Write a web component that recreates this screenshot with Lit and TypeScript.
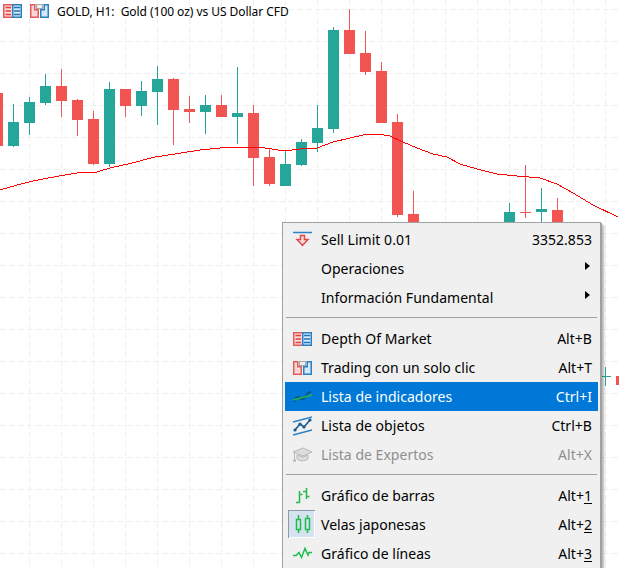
import { LitElement, html, css, svg } from "lit";
import { customElement } from "lit/decorators.js";

const RED = "#f25551";
const TEAL = "#26a69a";

// [bodyLeft, isTeal, bodyTop, bodyBottom, wickTop, wickBottom]
const CANDLES: [number, number, number, number, number, number][] = [
  [-8, 0, 93, 146, 93, 146],
  [8, 1, 122, 146, 104, 147],
  [24, 1, 102, 123, 97, 135],
  [40, 1, 86, 103, 74, 105],
  [56, 0, 86, 101, 69, 117],
  [72, 0, 100, 120, 99, 136],
  [88, 0, 119, 164, 111, 165],
  [104, 1, 89, 164, 82, 167],
  [120, 0, 89, 106, 89, 117],
  [136, 1, 91, 106, 81, 116],
  [152, 1, 79, 92, 66, 125],
  [168, 0, 79, 110, 78, 145],
  [184, 0, 109, 112, 96, 123],
  [200, 1, 105, 112, 95, 134],
  [216, 0, 105, 117, 95, 117],
  [232, 1, 113, 117, 67, 144],
  [248, 0, 113, 158, 105, 186],
  [264, 0, 157, 184, 148, 186],
  [280, 1, 164, 186, 150, 186],
  [296, 1, 142, 165, 139, 166],
  [312, 1, 128, 143, 105, 152],
  [328, 1, 30, 129, 27, 133],
  [344, 0, 30, 54, 9, 54],
  [360, 0, 53, 72, 31, 75],
  [376, 0, 71, 123, 62, 123],
  [392, 0, 122, 215, 114, 217],
  [408, 0, 214, 240, 191, 240],
  [504, 1, 212, 240, 203, 240],
  [520, 0, 212, 213, 165, 218],
  [536, 1, 209, 212, 188, 240],
  [552, 0, 210, 240, 198, 240],
  [600, 1, 376, 377, 367, 386],
  [616, 0, 376, 385, 376, 385],
];

const MA =
  "0,190 17,185 33,181 48,178 65,175 80,172.5 95,172.5 110,168 130,163.5 155,157 175,154 200,150 220,148 240,147 265,148 285,151 300,149 317,148 333,142 350,138 363,135 378,134 390,136 403,142 417,148 433,154 447,157 460,164 477,169 497,174 517,176 540,178 557,184 573,193 593,205 618,217";

const xs = Array.from({ length: 19 }, (_, i) => 29 + i * 32);
const ys = Array.from({ length: 18 }, (_, i) => 9 + i * 32);

const depthIcon = svg`
  <rect x="5.750" y="8.750" width="9" height="12.500" fill="#fbd8d8" stroke="#e25c5c" stroke-width="1.500"/>
  <rect x="14.750" y="8.750" width="8.500" height="12.500" fill="#d5e8f7" stroke="#2a7fc2" stroke-width="1.500"/>
  <path d="M7.500 11.500h5.500M7.500 15h5.500M7.500 18.500h5.500" stroke="#e0403f" stroke-width="1.500"/>
  <path d="M16 11.500h6M16 15h6M16 18.500h6" stroke="#1f74b8" stroke-width="1.500"/>`;

const tradeIcon = svg`
  <path d="M5.750 8.750h4v5h3.500v7.500h-7.500z" fill="#fbd8d8" stroke="#e25c5c" stroke-width="1.500"/>
  <path d="M23.250 8.750h-4v5h-3.500v7.500h7.500z" fill="#d5e8f7" stroke="#2a7fc2" stroke-width="1.500"/>
  <rect x="11.500" y="8.500" width="6" height="4" fill="#eee" stroke="#a8a8a8"/>`;

const sellIcon = svg`
  <path d="M5 7.500h19" stroke="#2f83c4" stroke-width="1.500"/>
  <path d="M12.500 10.500h4v4h3.500l-5.500 6-5.500-6h3.500z" fill="#fbd8d8" stroke="#e04a49" stroke-width="1.500"/>`;

const indIcon = svg`
  <path d="M6 20c2-6 4-6 6-4s4 2 6-2 3-4 5-4" fill="none" stroke="#0b4f86" stroke-width="1.800"/>
  <path d="M5 18l19-5" stroke="#1fb54a" stroke-width="1.300"/>`;

const objIcon = svg`
  <path d="M5 11l19-5M5 24l19-5" stroke="#2f83c4" stroke-width="1.300"/>
  <path d="M7 19l5-6 4 3 6-7" fill="none" stroke="#155a94" stroke-width="1.600"/>
  <circle cx="7" cy="19" r="1.600" fill="#155a94"/><circle cx="12" cy="13" r="1.600" fill="#155a94"/>
  <circle cx="16" cy="16" r="1.600" fill="#155a94"/><circle cx="22" cy="9" r="1.600" fill="#155a94"/>`;

const capIcon = svg`
  <path d="M5 12l10-4 9 4-9 4z" fill="#dcdcdc" stroke="#b9b9b9"/>
  <path d="M9 15v4c3 2.500 8 2.500 11 0v-4l-5 2z" fill="#dcdcdc" stroke="#b9b9b9"/>
  <path d="M6.500 13v6" stroke="#b9b9b9"/><circle cx="6.500" cy="20.500" r="1.500" fill="#b9b9b9"/>`;

const barIcon = svg`
  <path d="M11.500 10v12M8 21.500h3.500M11.500 13.500h3" stroke="#1fbb4a" stroke-width="1.500" fill="none"/>
  <path d="M18.500 7v11M15 10.500h3.500M18.500 15.500h3" stroke="#1fbb4a" stroke-width="1.500" fill="none"/>`;

const candleIcon = svg`
  <path d="M10.500 5v18M19.500 5v18" stroke="#1fbb4a" stroke-width="1.500"/>
  <rect x="8.500" y="9.500" width="4" height="10" fill="#d5e3f1" stroke="#1fbb4a" stroke-width="1.500"/>
  <rect x="17.500" y="8.500" width="4" height="11" fill="#d5e3f1" stroke="#1fbb4a" stroke-width="1.500"/>`;

const lineIcon = svg`
  <path d="M5 16.500h3l3-3 2.500 5 3.500-9 3 6.500 1-2.500h3" fill="none" stroke="#1fbb4a" stroke-width="1.500"/>`;

type Row = {
  icon?: unknown;
  label?: string;
  right?: string;
  digit?: string;
  arrow?: boolean;
  active?: boolean;
  disabled?: boolean;
  pressed?: boolean;
  sep?: boolean;
};

const ROWS: Row[] = [
  { icon: sellIcon, label: "Sell Limit 0.01", right: "3352.853" },
  { label: "Operaciones", arrow: true },
  { label: "Información Fundamental", arrow: true },
  { sep: true },
  { icon: depthIcon, label: "Depth Of Market", right: "Alt+B" },
  { icon: tradeIcon, label: "Trading con un solo clic", right: "Alt+T" },
  { icon: indIcon, label: "Lista de indicadores", right: "Ctrl+I", active: true },
  { icon: objIcon, label: "Lista de objetos", right: "Ctrl+B" },
  { icon: capIcon, label: "Lista de Expertos", right: "Alt+X", disabled: true },
  { sep: true },
  { icon: barIcon, label: "Gráfico de barras", right: "Alt+", digit: "1" },
  { icon: candleIcon, label: "Velas japonesas", right: "Alt+", digit: "2", pressed: true },
  { icon: lineIcon, label: "Gráfico de líneas", right: "Alt+", digit: "3" },
];

@customElement("app-root")
export class AppRoot extends LitElement {
  static styles = css`
    :host {
      display: block;
      position: relative;
      width: 619px;
      height: 568px;
      overflow: hidden;
      background: #fff;
      font-family: "Noto Sans", sans-serif;
    }
    .chart {
      position: absolute;
      inset: 0;
      display: block;
    }
    .head {
      position: absolute;
      left: 3px;
      top: 4px;
      display: flex;
      align-items: center;
      gap: 8px;
      height: 14px;
      font-size: 12px;
      letter-spacing: -0.05px;
      color: #000;
      white-space: pre;
    }
    .head svg {
      display: block;
      width: 19px;
      height: 14px;
    }
    .menu {
      position: absolute;
      left: 282px;
      top: 222px;
      width: 313px;
      height: 360px;
      padding: 2px;
      background: #f0f0f0;
      border: 1px solid #a0a0a0;
      box-shadow: 1px 1px 0 #a0a0a0, 3px 3px 2px rgba(0, 0, 0, 0.28);
      font-size: 14px;
      letter-spacing: 0.03px;
      color: #000;
    }
    .row {
      display: flex;
      align-items: center;
      height: 29px;
      padding-right: 6px;
    }
    .icon {
      flex: none;
      width: 27px;
      height: 29px;
      margin: 0 6px 0 3px;
      box-sizing: border-box;
    }
    .icon svg {
      display: block;
      width: 27px;
      height: 29px;
    }
    .label {
      flex: 1;
      white-space: nowrap;
    }
    .right {
      white-space: nowrap;
    }
    .right u {
      text-underline-offset: 2px;
    }
    .arrow {
      width: 0;
      height: 0;
      margin: -5px 2px 0 0;
      border-left: 5px solid #000;
      border-top: 4.5px solid transparent;
      border-bottom: 4.5px solid transparent;
    }
    .active {
      background: #0078d7;
      color: #fff;
    }
    .disabled {
      color: #8f8f8f;
    }
    .pressed .icon {
      height: 28px;
      background: #d5e3f1;
      align-self: flex-start;
      box-shadow: inset 1px 1px 0 #8d9aa6, inset -1px -1px 0 #ffffff;
    }
    .sep {
      height: 12px;
      display: flex;
      align-items: flex-start;
      padding: 5px 1px 0;
      box-sizing: border-box;
    }
    .sep i {
      display: block;
      flex: 1;
      height: 1px;
      background: #a0a0a0;
    }
  `;

  private candle([x, teal, top, bottom, wt, wb]: (typeof CANDLES)[number]) {
    const c = teal ? TEAL : RED;
    return svg`
      <rect x=${x + 5} y=${wt} width="1" height=${wb - wt} fill=${c}/>
      <rect x=${x} y=${top} width="11" height=${bottom - top} fill=${c}/>`;
  }

  render() {
    return html`
      <svg class="chart" width="619" height="568" viewBox="0 0 619 568" shape-rendering="crispEdges">
        ${xs.map(
          (x) => svg`<line x1=${x + 0.5} y1="0" x2=${x + 0.5} y2="568" stroke="#f0f0f0" stroke-dasharray="6 3"/>`
        )}
        ${ys.map(
          (y) => svg`<line x1="0" y1=${y + 0.5} x2="619" y2=${y + 0.5} stroke="#f0f0f0" stroke-dasharray="6 3"/>`
        )}
        ${CANDLES.map((c) => this.candle(c))}
        <polyline points=${MA} fill="none" stroke="#ff0000" stroke-width="1"/>
      </svg>
      <div class="head">
        <svg viewBox="5 8 19 14">${depthIcon}</svg>
        <svg viewBox="5 8 19 14">${tradeIcon}</svg>
        <span>GOLD, H1:  Gold (100 oz) vs US Dollar CFD</span>
      </div>
      <div class="menu">
        ${ROWS.map((r) =>
          r.sep
            ? html`<div class="sep"><i></i></div>`
            : html`<div class="row ${r.active ? "active" : ""} ${r.disabled ? "disabled" : ""} ${r.pressed ? "pressed" : ""}">
                <div class="icon">${r.icon ? html`<svg viewBox="0 0 27 29">${r.icon}</svg>` : ""}</div>
                <div class="label">${r.label}</div>
                ${r.arrow ? html`<div class="arrow"></div>` : ""}
                ${r.right ? html`<div class="right">${r.right}${r.digit ? html`<u>${r.digit}</u>` : ""}</div>` : ""}
              </div>`
        )}
      </div>
    `;
  }
}
